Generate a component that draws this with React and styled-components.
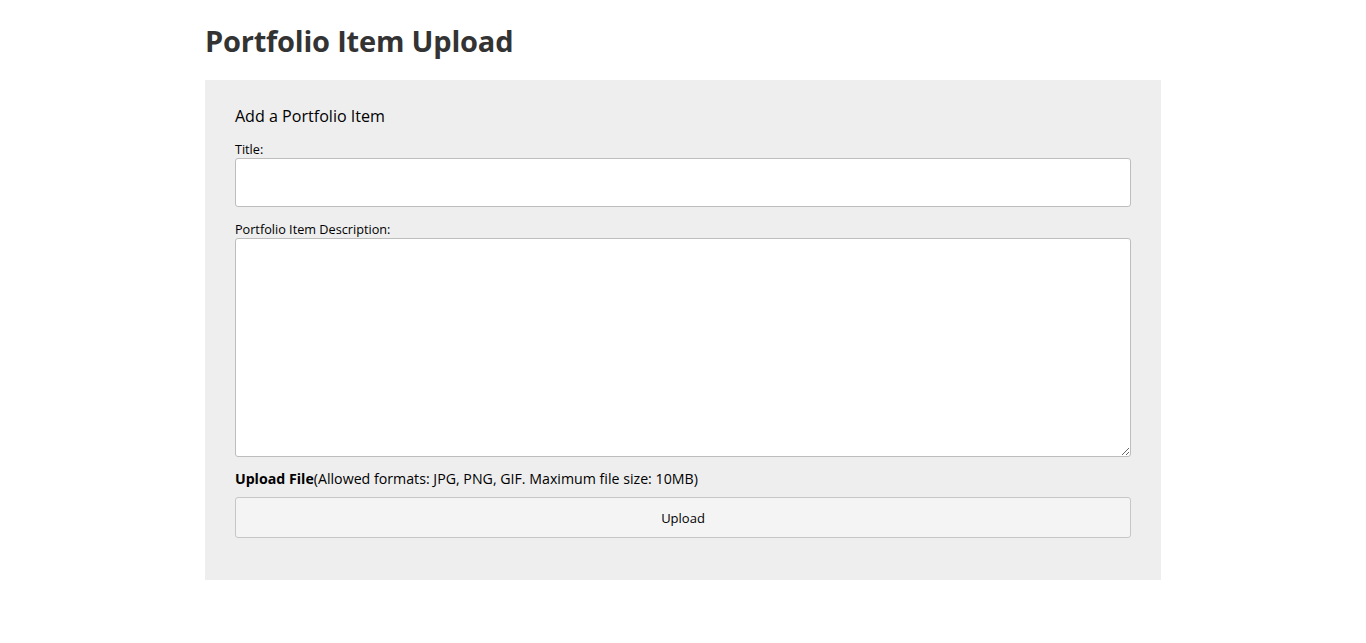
import React from "react";
import styled, { createGlobalStyle } from "styled-components";

const GlobalStyle = createGlobalStyle`
  body {
    margin: 0;
    background: #ffffff;
    font-family: "Open Sans", "Noto Sans", sans-serif;
    color: #000;
  }
`;

const Page = styled.div`
  width: 70%;
  margin: 0 auto;
  padding-top: 20px;
`;

const Heading = styled.h1`
  margin: 0 0 18px;
  font-size: 29px;
  font-weight: 700;
  color: #333;
  line-height: 42px;
  letter-spacing: -0.2px;
`;

const Panel = styled.div`
  background: #eeeeee;
  padding: 24px 30px 42px;
`;

const PanelTitle = styled.h2`
  margin: 0 0 13px;
  font-size: 16.1px;
  font-weight: 400;
  line-height: 24px;
`;

const Field = styled.div`
  display: flex;
  flex-direction: column;
  margin-bottom: 14px;
`;

const Label = styled.label`
  font-size: 12.7px;
  line-height: 17px;
`;

const TextInput = styled.input`
  box-sizing: border-box;
  width: 100%;
  height: 49px;
  border: 1px solid #bdbdbd;
  border-radius: 3px;
  background: #fff;
  padding: 0 10px;
  font: inherit;
`;

const TextArea = styled.textarea`
  box-sizing: border-box;
  width: 100%;
  height: 219px;
  border: 1px solid #bdbdbd;
  border-radius: 3px;
  background: #fff;
  padding: 8px 10px;
  font: inherit;
  resize: vertical;
`;

const UploadNote = styled.p`
  margin: -3px 0 7px;
  font-size: 14.2px;
  line-height: 22px;

  strong {
    font-weight: 700;
  }
`;

const UploadButton = styled.button`
  box-sizing: border-box;
  width: 100%;
  height: 41px;
  border: 1px solid #c6c6c6;
  border-radius: 3px;
  background: #f4f4f4;
  font-family: inherit;
  font-size: 13px;
  color: #000;
  cursor: pointer;
`;

const App = () => {
  return (
    <>
      <GlobalStyle />
      <Page>
        <Heading>Portfolio Item Upload</Heading>
        <Panel>
          <PanelTitle>Add a Portfolio Item</PanelTitle>
          <Field>
            <Label htmlFor="title">Title:</Label>
            <TextInput id="title" type="text" />
          </Field>
          <Field>
            <Label htmlFor="desc">Portfolio Item Description:</Label>
            <TextArea id="desc" />
          </Field>
          <UploadNote>
            <strong>Upload File</strong>(Allowed formats: JPG, PNG, GIF. Maximum file size: 10MB)
          </UploadNote>
          <UploadButton type="button">Upload</UploadButton>
        </Panel>
      </Page>
    </>
  );
};

export default App;
